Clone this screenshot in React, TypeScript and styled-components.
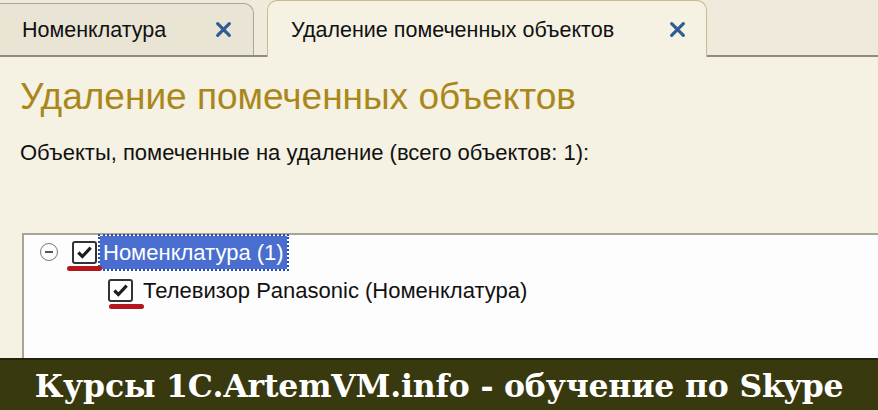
import React from 'react';
import styled, {createGlobalStyle} from 'styled-components';

const GlobalStyle = createGlobalStyle`
  html, body {
    margin: 0;
    padding: 0;
    background: #f5f1e3;
  }
  body {
    width: 878px;
    height: 410px;
    overflow: hidden;
    font-family: "Liberation Sans", Arial, sans-serif;
  }
`;

const CloseIcon = () => (
    <svg width="17" height="17" viewBox="0 0 16 16">
        <path d="M2.5 2.5 L13.5 13.5 M13.5 2.5 L2.5 13.5" stroke="#2e5c93" strokeWidth="3" strokeLinecap="round"/>
    </svg>
);

const Check = () => (
    <svg width="17" height="15" viewBox="0 0 16 14">
        <path d="M2.2 7 L6 10.8 L13.8 2.4" stroke="#1e1e1e" strokeWidth="3" fill="none"/>
    </svg>
);

const tree = [
    {id: 1, level: 0, text: 'Номенклатура (1)', selected: true, toggle: true, mark: -7},
    {id: 2, level: 1, text: 'Телевизор Panasonic (Номенклатура)', selected: false, toggle: false, mark: -1},
];

export default function App() {
    return (
        <>
            <GlobalStyle/>
            <Page>
                <TabBar>
                    <Tab>
                        <TabTitle>Номенклатура</TabTitle>
                        <CloseIcon/>
                    </Tab>
                    <Tab active>
                        <TabTitle>Удаление помеченных объектов</TabTitle>
                        <CloseIcon/>
                    </Tab>
                </TabBar>
                <Content>
                    <Title>Удаление помеченных объектов</Title>
                    <Caption>Объекты, помеченные на удаление (всего объектов: 1):</Caption>
                    <TreePanel>
                        {tree.map(row => (
                            <TreeRow key={row.id} level={row.level}>
                                <Toggle visible={row.toggle}/>
                                <CheckBox>
                                    <Check/>
                                    <Mark offset={row.mark}/>
                                </CheckBox>
                                <Label selected={row.selected}>{row.text}</Label>
                            </TreeRow>
                        ))}
                    </TreePanel>
                </Content>
                <Banner>Курсы 1С.ArtemVM.info - обучение по Skype</Banner>
            </Page>
        </>
    );
}

const Page = styled.div`
  display: flex;
  flex-direction: column;
  height: 410px;
`;

const TabBar = styled.div`
  height: 57px;
  flex-shrink: 0;
  display: flex;
  align-items: flex-end;
  gap: 13px;
  border-bottom: 2px solid #8f8b7c;
  box-sizing: border-box;
  background: #efeadb;
`;

const Tab = styled.div<{ active?: boolean }>`
  box-sizing: border-box;
  display: flex;
  align-items: center;
  justify-content: space-between;
  width: ${p => p.active ? '440px' : '256px'};
  height: ${p => p.active ? '57px' : '52px'};
  margin-left: ${p => p.active ? '0' : '-2px'};
  margin-bottom: ${p => p.active ? '-2px' : '0'};
  padding: ${p => p.active ? '0 20px 0 23px' : '0 21px 0 23px'};
  border: 1px solid ${p => p.active ? '#c9b98c' : '#a9a596'};
  border-bottom: none;
  border-radius: ${p => p.active ? '10px 10px 0 0' : '0 10px 0 0'};
  background: ${p => p.active ? '#f5f1e3' : '#e9e4d4'};
`;

const TabTitle = styled.span`
  font-size: 21.5px;
  color: #111;
  padding-top: 2px;
`;

const Content = styled.div`
  flex: 1;
  display: flex;
  flex-direction: column;
  padding-left: 20px;
  min-height: 0;
`;

const Title = styled.div`
  margin-top: 18px;
  font-size: 37px;
  line-height: 44px;
  color: #a9871a;
`;

const Caption = styled.div`
  margin-top: 21px;
  font-size: 22px;
  line-height: 26px;
  color: #111;
`;

const TreePanel = styled.div`
  margin-top: 67px;
  margin-left: 2px;
  flex: 1;
  background: #fdfdfd;
  border-top: 2px solid #a8a596;
  border-left: 2px solid #a8a596;
  display: flex;
  flex-direction: column;
  gap: 4px;
`;

const TreeRow = styled.div<{ level: number }>`
  display: flex;
  align-items: center;
  height: 34px;
  padding-left: ${p => 16 + p.level * 36}px;
`;

const Toggle = styled.div<{ visible: boolean }>`
  visibility: ${p => p.visible ? 'visible' : 'hidden'};
  position: relative;
  width: 16px;
  height: 16px;
  border: 1px solid #777;
  border-radius: 50%;
  margin-right: 14px;

  &::after {
    content: '';
    position: absolute;
    left: 4px;
    right: 4px;
    top: 7px;
    height: 2px;
    background: #555;
  }
`;

const CheckBox = styled.div`
  position: relative;
  box-sizing: border-box;
  width: 25px;
  height: 23px;
  border: 2px solid #333;
  border-radius: 3px;
  background: #fff;
  display: flex;
  align-items: center;
  justify-content: center;
`;

const Mark = styled.div<{ offset: number }>`
  position: absolute;
  left: ${p => p.offset}px;
  bottom: -9px;
  width: 35px;
  height: 5px;
  border-radius: 3px;
  background: #b5161b;
`;

const Label = styled.span<{ selected: boolean }>`
  margin-left: ${p => p.selected ? '3px' : '7px'};
  padding: 3px 3px;
  font-size: 22px;
  line-height: 27px;
  color: ${p => p.selected ? '#fff' : '#111'};
  background: ${p => p.selected ? '#4a6ed0' : 'transparent'};
  outline: ${p => p.selected ? '2px dotted #2c4aa8' : 'none'};
`;

const Banner = styled.div`
  height: 52px;
  flex-shrink: 0;
  background: #39390f;
  border-top: 2px solid #24240a;
  box-sizing: border-box;
  display: flex;
  align-items: center;
  justify-content: center;
  color: #fff;
  font-family: "DejaVu Serif", "Liberation Serif", serif;
  font-weight: bold;
  font-size: 31.5px;
  letter-spacing: -0.2px;
`;
